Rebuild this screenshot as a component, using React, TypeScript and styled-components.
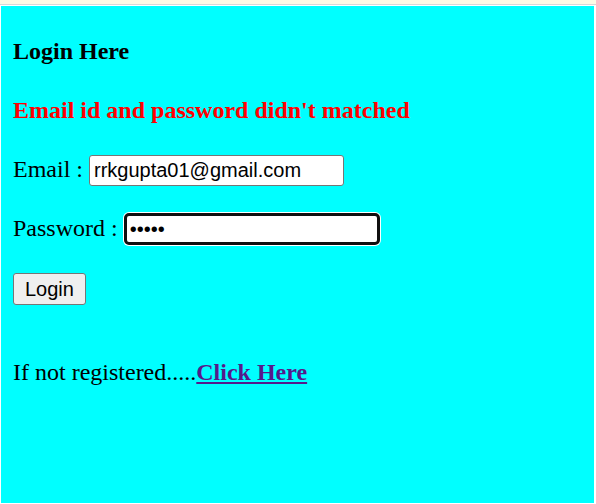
import React, { useEffect, useRef } from "react";
import styled, { createGlobalStyle } from "styled-components";

const GlobalStyle = createGlobalStyle`
  html, body {
    margin: 0;
    padding: 0;
    background: #ffffff;
  }
  * { box-sizing: border-box; }
`;

const TopStrip = styled.div`
  height: 5px;
  background: #fdfae6;
  border-bottom: 1px solid #d8d8d8;
`;

const Frame = styled.div`
  padding: 1px 2px 1px 1px;
  background: #ffffff;
`;

const Panel = styled.main`
  height: 497px;
  background: #00ffff;
  padding: 31px 12px 0 12px;
  font-family: "Liberation Serif", "Times New Roman", serif;
  font-size: 24px;
  color: #000;
`;

const Heading = styled.h4<{ $error?: boolean }>`
  margin: 0 0 31px 0;
  font-size: 24px;
  line-height: 28px;
  font-weight: 700;
  color: ${(p) => (p.$error ? "#ff0000" : "#000000")};
`;

const Row = styled.div<{ $gap?: number }>`
  display: flex;
  align-items: baseline;
  line-height: 28px;
  margin-top: ${(p) => p.$gap ?? 0}px;
  white-space: pre;
`;

const Field = styled.input<{ $focused?: boolean }>`
  width: ${(p) => (p.$focused ? "256px" : "255px")};
  height: ${(p) => (p.$focused ? "32px" : "31px")};
  padding: ${(p) => (p.$focused ? "1px 3px" : "1px 4px")};
  font-family: "Liberation Sans", Arial, sans-serif;
  font-size: 20px;
  color: #000;
  background: #ffffff;
  border: ${(p) => (p.$focused ? "3px solid #101010" : "1px solid #767676")};
  border-radius: ${(p) => (p.$focused ? "5px" : "3px")};
  box-shadow: ${(p) => (p.$focused ? "0 0 0 1px #ffffff" : "none")};
  outline: none;
  caret-color: #000;
`;

const Button = styled.button`
  height: 32px;
  padding: 0 11px;
  font-family: "Liberation Sans", Arial, sans-serif;
  font-size: 20px;
  color: #000;
  background: #efefef;
  border: 1px solid #767676;
  border-radius: 3px;
`;

const Footer = styled.p`
  margin: 53px 0 0 0;
  line-height: 28px;
`;

const Link = styled.a`
  color: #551a8b;
  font-weight: 700;
  text-decoration: underline;
`;

export default function App() {
  const pwRef = useRef<HTMLInputElement>(null);
  useEffect(() => {
    const el = pwRef.current;
    if (el) {
      el.focus();
      el.setSelectionRange(5, 5);
    }
  }, []);

  return (
    <>
      <GlobalStyle />
      <TopStrip />
      <Frame>
        <Panel>
          <Heading>Login Here</Heading>
          <Heading $error>Email id and password didn't matched</Heading>
          <Row $gap={4}>
            <span>Email : </span>
            <Field type="email" defaultValue="rrkgupta01@gmail.com" />
          </Row>
          <Row $gap={27}>
            <span>Password : </span>
            <Field ref={pwRef} $focused type="password" defaultValue="12345" />
          </Row>
          <Row $gap={28}>
            <Button type="button">Login</Button>
          </Row>
          <Footer>
            If not registered.....<Link href="#register">Click Here</Link>
          </Footer>
        </Panel>
      </Frame>
    </>
  );
}
